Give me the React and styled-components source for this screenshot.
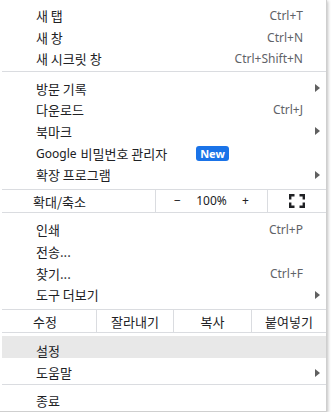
import styled, { createGlobalStyle } from "styled-components";

const Global = createGlobalStyle`
  html, body { margin: 0; padding: 0; background: #ffffff; }
  body { font-family: "Noto Sans", "Noto Sans CJK KR", sans-serif; }
`;

const Menu = styled.div`
  width: 327px;
  height: 412px;
  box-sizing: border-box;
  padding-top: 1px;
  background: #ffffff;
  border-right: 1px solid #cfcfcf;
  border-bottom: 1px solid #cfcfcf;
  box-shadow: 1px 1px 3px rgba(0, 0, 0, 0.25);
  color: #202124;
  font-size: 13px;
`;

const Row = styled.div`
  height: 21.6px;
  box-sizing: border-box;
  padding: 7px 6px 0 34px;
  margin-left: 2px;
  display: grid;
  grid-template-columns: 1fr auto 15px;
  align-items: center;
  background: ${(p) => (p.$active ? "#e8e8e8" : "transparent")};
`;

const Label = styled.span`
  display: flex;
  align-items: center;
  line-height: 15px;
  font-family: "Noto Sans CJK KR", sans-serif;
  white-space: nowrap;
`;

const Latin = styled.span`
  font-family: "Noto Sans", sans-serif;
  font-size: 12px;
  margin-right: 4px;
`;

const Badge = styled.span`
  margin-left: 29px;
  background: #1a73e8;
  color: #ffffff;
  font-family: "Noto Sans", sans-serif;
  font-weight: 700;
  font-size: 11px;
  line-height: 15px;
  padding: 0 4px;
  border-radius: 3px;
`;

const Shortcut = styled.span`
  font-family: "Noto Sans", sans-serif;
  font-size: 12px;
  color: #5f6368;
  line-height: 15px;
  margin-right: 2px;
`;

const Arrow = styled.span`
  justify-self: end;
  width: 0;
  height: 0;
  border-left: 5px solid #606060;
  border-top: 4px solid transparent;
  border-bottom: 4px solid transparent;
`;

const Separator = styled.div`
  height: 1px;
  background: #dadce0;
  margin: ${(p) => p.$m || "5px 0 2px 2px"};
`;

const Strip = styled.div`
  margin: ${(p) => p.$m};
  margin-left: 2px;
  height: 24px;
  box-sizing: border-box;
  border-top: 1px solid #dadce0;
  border-bottom: 1px solid #dadce0;
  display: grid;
  grid-template-columns: ${(p) => p.$cols};
`;

const Cell = styled.div`
  display: flex;
  align-items: center;
  justify-content: ${(p) => p.$justify || "center"};
  padding: ${(p) => p.$pad || "0"};
  font-family: "Noto Sans CJK KR", sans-serif;
  border-left: ${(p) => (p.$first ? "none" : "1px solid #dadce0")};
`;

const ZoomText = styled.span`
  font-family: "Noto Sans", sans-serif;
  font-size: 12px;
  color: #202124;
`;

function FullscreenIcon() {
  return (
    <svg width="16" height="14" viewBox="0 0 16 14">
      <path
        d="M1.2 5.5V1.2H5.5M10.5 1.2H14.8V5.5M14.8 8.5V12.8H10.5M5.5 12.8H1.2V8.5"
        fill="none"
        stroke="#202124"
        strokeWidth="2.4"
      />
    </svg>
  );
}

function Item({ label, shortcut, arrow, active, children }) {
  return (
    <Row $active={active}>
      <Label>
        {label}
        {children}
      </Label>
      {shortcut ? <Shortcut>{shortcut}</Shortcut> : <span />}
      {arrow ? <Arrow /> : <span />}
    </Row>
  );
}

export default function App() {
  return (
    <>
      <Global />
      <Menu>
        <Item label="새 탭" shortcut="Ctrl+T" />
        <Item label="새 창" shortcut="Ctrl+N" />
        <Item label="새 시크릿 창" shortcut="Ctrl+Shift+N" />
        <Separator />
        <Item label="방문 기록" arrow />
        <Item label="다운로드" shortcut="Ctrl+J" />
        <Item label="북마크" arrow />
        <Item label={<><Latin>Google</Latin>비밀번호 관리자</>}>
          <Badge>New</Badge>
        </Item>
        <Item label="확장 프로그램" arrow />
        <Strip $m="7px 0 2.6px" $cols="153px 112px 1fr">
          <Cell $first $justify="flex-start" $pad="1px 0 0 31px">확대/축소</Cell>
          <Cell $justify="space-between" $pad="0 18px">
            <ZoomText>−</ZoomText>
            <ZoomText>100%</ZoomText>
            <ZoomText>+</ZoomText>
          </Cell>
          <Cell>
            <FullscreenIcon />
          </Cell>
        </Strip>
        <Item label="인쇄" shortcut="Ctrl+P" />
        <Item label="전송..." />
        <Item label="찾기..." shortcut="Ctrl+F" />
        <Item label="도구 더보기" arrow />
        <Strip $m="7.4px 0 3.3px" $cols="94px 77px 78px 1fr">
          <Cell $first $justify="flex-start" $pad="1px 0 0 31px">수정</Cell>
          <Cell>잘라내기</Cell>
          <Cell>복사</Cell>
          <Cell>붙여넣기</Cell>
        </Strip>
        <Item label="설정" active />
        <Item label="도움말" arrow />
        <Separator $m="4.3px 0 1px 2px" />
        <Item label="종료" />
      </Menu>
    </>
  );
}
